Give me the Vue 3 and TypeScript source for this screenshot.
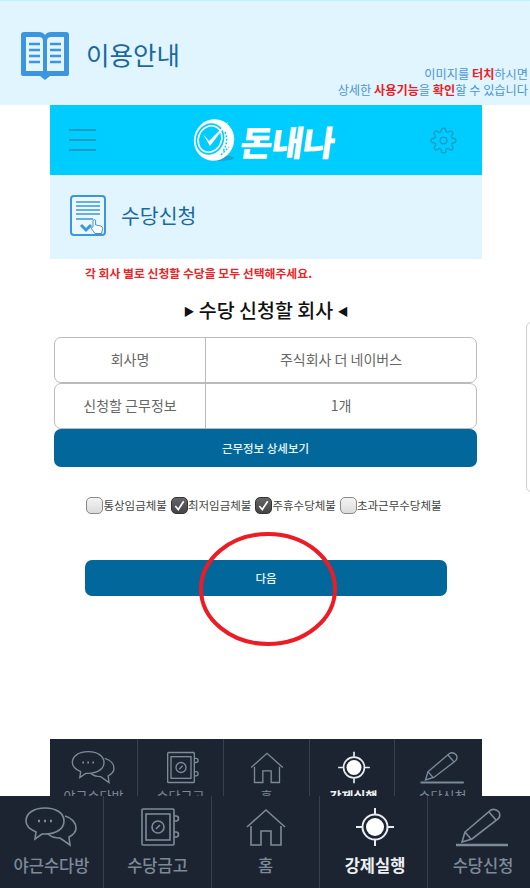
<template>
  <div class="page">
    <header class="guide">
      <div class="guide__title">
        <svg class="guide__book" viewBox="0 0 48 48" aria-hidden="true">
          <path d="M3 0h15q4 0 6 3q2-3 6-3h15q3 0 3 3v39q0 2-3 2H29l-5 4l-5-4H3q-3 0-3-2V3q0-3 3-3z" fill="#3d95de" />
          <path d="M5 5h13q4 0 4 4v30H5zM26 9q0-4 4-4h13v34H26z" fill="#e3f5ff" />
          <path d="M8 12h11M8 18h11M8 24h11M8 30h11M29 12h11M29 18h11M29 24h11M29 30h11" stroke="#3d95de" stroke-width="2.6" />
        </svg>
        <span>이용안내</span>
      </div>
      <p class="guide__help">
        이미지를 <b>터치</b>하시면<br />
        상세한 <b>사용기능</b>을 <b>확인</b>할 수 있습니다
      </p>
    </header>

    <div class="phone">
      <div class="topbar">
        <div class="topbar__menu"><i></i><i></i><i></i></div>
        <div class="logo">
          <svg class="logo__coin" viewBox="0 0 44 44" aria-hidden="true">
            <ellipse cx="27" cy="40" rx="15" ry="3" fill="#12a9d4" />
            <ellipse cx="22" cy="22" rx="20" ry="21" fill="#fff" transform="rotate(25 22 22)" />
            <ellipse cx="18" cy="21" rx="14" ry="16" fill="#00cdff" transform="rotate(25 18 21)" />
            <ellipse cx="18" cy="21" rx="11.5" ry="13.5" fill="none" stroke="#fff" stroke-width="1.6" transform="rotate(25 18 21)" />
            <path d="M11 16l6 7L37 3l-19 25z" fill="#fff" />
            <path d="M33 14q4 10-2 19M29 37l8-8" stroke="#00cdff" stroke-width="1.4" stroke-dasharray="2 1.5" fill="none" />
          </svg>
          <span class="logo__text">돈내나</span>
        </div>
        <svg class="topbar__gear" viewBox="0 0 24 24" aria-hidden="true">
          <circle cx="12" cy="12" r="3" />
          <path d="M19.4 15a1.65 1.65 0 0 0 .33 1.82l.06.06a2 2 0 0 1-2.83 2.83l-.06-.06a1.65 1.65 0 0 0-2.82 1.17V21a2 2 0 0 1-4 0v-.09A1.65 1.65 0 0 0 7.26 19.7l-.06.06a2 2 0 0 1-2.83-2.83l.06-.06A1.65 1.65 0 0 0 3.26 14H3a2 2 0 0 1 0-4h.09A1.65 1.65 0 0 0 4.3 7.2l-.06-.06a2 2 0 0 1 2.83-2.83l.06.06A1.65 1.65 0 0 0 10 3.2V3a2 2 0 0 1 4 0v.09a1.65 1.65 0 0 0 2.8 1.17l.06-.06a2 2 0 0 1 2.83 2.83l-.06.06A1.65 1.65 0 0 0 20.8 10H21a2 2 0 0 1 0 4h-.09a1.65 1.65 0 0 0-1.51 1z" />
        </svg>
      </div>

      <div class="subhead">
        <svg class="subhead__icon" viewBox="0 0 36 41" aria-hidden="true">
          <rect x="1" y="1" width="34" height="39" rx="3" fill="#e9f7fe" stroke="#3d95de" stroke-width="2" />
          <path d="M6 7h24M6 11h24M6 15h24M6 19h24M6 24h17" stroke="#3d95de" stroke-width="1.5" />
          <path d="M11 30l5 5l5-5" fill="none" stroke="#3d95de" stroke-width="3" />
          <path d="M21 33l2-1V26a1.3 1.3 0 0 1 2.6 0V30l5 1q2 .5 2 2.5l-1 5H25z" fill="#fff" stroke="#3d95de" stroke-width="1" />
        </svg>
        <span>수당신청</span>
      </div>

      <p class="notice">각 회사 별로 신청할 수당을 모두 선택해주세요.</p>
      <h2 class="heading"><small>▶</small> 수당 신청할 회사 <small>◀</small></h2>

      <div class="info">
        <div v-for="row in infoRows" :key="row.label" class="info__row">
          <div class="info__label">{{ row.label }}</div>
          <div class="info__value">{{ row.value }}</div>
        </div>
        <button class="btn btn--detail" type="button">근무정보 상세보기</button>
      </div>

      <div class="checks">
        <label v-for="check in checks" :key="check.label" class="check">
          <span :class="['check__box', { 'is-on': check.on }]">
            <svg v-if="check.on" viewBox="0 0 16 16" aria-hidden="true">
              <path d="M3.5 8.5l3.2 3.8L12.5 3.5" />
            </svg>
          </span>
          {{ check.label }}
        </label>
      </div>

      <div class="next">
        <button class="btn btn--next" type="button">다음</button>
        <svg class="next__mark" viewBox="0 0 140 116" aria-hidden="true">
          <ellipse cx="70" cy="58" rx="67" ry="55" />
        </svg>
      </div>

      <nav class="tabs tabs--inner" aria-label="미리보기 메뉴">
        <div v-for="tab in tabs" :key="tab.label" :class="['tab', { 'is-active': tab.active }]">
          <svg class="tab__icon" viewBox="0 0 60 44" aria-hidden="true" v-html="tab.icon"></svg>
          <span>{{ tab.label }}</span>
        </div>
      </nav>
    </div>

    <nav class="tabs tabs--main" aria-label="메뉴">
      <div v-for="tab in tabs" :key="tab.label" :class="['tab', { 'is-active': tab.active }]">
        <svg class="tab__icon" viewBox="0 0 60 44" aria-hidden="true" v-html="tab.icon"></svg>
        <span>{{ tab.label }}</span>
      </div>
    </nav>

    <div class="edge"></div>
  </div>
</template>

<script setup lang="ts">
interface Tab {
  label: string
  icon: string
  active?: boolean
}

const infoRows = [
  { label: '회사명', value: '주식회사 더 네이버스' },
  { label: '신청할 근무정보', value: '1개' },
]

const checks = [
  { label: '통상임금체불', on: false },
  { label: '최저임금체불', on: true },
  { label: '주휴수당체불', on: true },
  { label: '초과근무수당체불', on: false },
]

const tabs: Tab[] = [
  {
    label: '야근수다방',
    icon: '<path d="M14 27C7 24 4 20 4 16C4 8 12 3 23 3C34 3 42 8 42 16C42 24 34 29 23 29L20 29L13 34Z"/><path d="M43 11C50 13 54 18 54 23C54 27 51 30 47 32L48 40L38 33C33 33 29 32 26 29"/><path d="M16 16h2M22 16h2M28 16h2" stroke-width="2.4"/>',
  },
  {
    label: '수당금고',
    icon: '<rect x="14" y="4" width="32" height="36" rx="1"/><rect x="18" y="9" width="24" height="26"/><circle cx="30" cy="22" r="6"/><path d="M28 24l4-4M46 11h2a2 2 0 0 1 0 5h-2M46 27h2a2 2 0 0 1 0 5h-2"/>',
  },
  {
    label: '홈',
    icon: '<path d="M11 22L30 5L49 22"/><path d="M15 21V40H25V26H35V40H45V21"/>',
  },
  {
    label: '강제실행',
    active: true,
    icon: '<circle cx="30" cy="22" r="9" fill="#fff" stroke="none"/><circle cx="30" cy="22" r="12.5" stroke-width="2"/><path d="M30 3v6M30 35v6M11 22h6M43 22h6" stroke-width="2"/>',
  },
  {
    label: '수당신청',
    icon: '<path d="M12 27L38 5Q42 3 46 7Q48 11 45 14L19 34L9 37Z"/><path d="M36 7L43 15M12 27L18 34" /><path d="M3 40H55" stroke-width="2.5"/>',
  },
]
</script>

<style scoped>
.page {
  position: relative;
  width: 530px;
  height: 888px;
  overflow: hidden;
  background: #fff;
  font-family: "Noto Sans CJK KR", "Noto Sans", sans-serif;
}

.guide {
  display: flex;
  justify-content: space-between;
  box-sizing: border-box;
  height: 105px;
  padding: 31px 2px 7px 21px;
  background: #e0f5ff;
  border-top: 1px solid #bdf2ff;
}

.guide__title {
  display: flex;
  align-items: flex-start;
  gap: 17px;
  color: #1a689f;
  font-size: 25.5px;
  line-height: 44px;
}

.guide__book {
  width: 48px;
  height: 48px;
}

.guide__help {
  align-self: flex-end;
  margin: 0;
  color: #4a94d8;
  font-size: 12.2px;
  line-height: 16px;
  text-align: right;
}

.guide__help b {
  color: #ee1c25;
}

.phone {
  width: 432px;
  margin-left: 50px;
}

.topbar {
  display: flex;
  align-items: center;
  justify-content: space-between;
  box-sizing: border-box;
  height: 70px;
  padding: 0 25px 0 19px;
  background: #00cdff;
}

.topbar__menu {
  display: flex;
  flex-direction: column;
  gap: 8px;
  width: 27px;
}

.topbar__menu i {
  height: 2px;
  background: #1a9cc6;
}

.topbar__gear {
  width: 27px;
  height: 27px;
  fill: none;
  stroke: #1a9cc6;
  stroke-width: 1.2;
}

.logo {
  display: flex;
  align-items: center;
  gap: 5px;
  color: #fff;
  font-size: 35px;
  font-weight: 900;
  letter-spacing: -1px;
}

.logo__coin {
  width: 44px;
  height: 44px;
}

.logo__text {
  transform: skewX(-8deg);
}

.subhead {
  display: flex;
  align-items: center;
  gap: 15px;
  box-sizing: border-box;
  height: 84px;
  padding: 0 0 4px 20px;
  background: #e0f5ff;
  color: #1a689f;
  font-size: 20.5px;
}

.subhead__icon {
  width: 36px;
  height: 41px;
}

.notice {
  margin: 5px 0 0 35px;
  color: #e8262a;
  font-size: 11.85px;
  font-weight: 700;
  line-height: 18px;
}

.heading {
  margin: 14px 0 0;
  color: #111;
  font-size: 19.5px;
  font-weight: 500;
  line-height: 28px;
  text-align: center;
}

.heading small {
  font-size: 11px;
  vertical-align: 2px;
}

.info {
  display: flex;
  flex-direction: column;
  margin: 12px 5px 0 4px;
}

.info__row {
  display: grid;
  grid-template-columns: 150px 1fr;
  box-sizing: border-box;
  height: 46px;
  border: 1.5px solid #bbb;
  border-radius: 7px;
  color: #666;
  font-size: 14px;
  text-align: center;
  line-height: 43px;
}

.info__value {
  border-left: 1.5px solid #bbb;
}

.btn {
  display: block;
  border: none;
  background: #02689c;
  color: #e8f6ff;
  font-family: inherit;
  font-size: 11.5px;
  font-weight: 500;
}

.btn--detail {
  height: 38px;
  border-radius: 7px;
}

.checks {
  display: flex;
  justify-content: center;
  gap: 4px;
  margin-top: 29px;
  padding-right: 4px;
  color: #444;
  font-size: 11.5px;
  line-height: 18px;
}

.check {
  display: flex;
  align-items: center;
  gap: 0;
}

.check__box {
  box-sizing: border-box;
  width: 17px;
  height: 17px;
  border: 1px solid #888;
  border-radius: 5px;
  background: linear-gradient(#f3f3f3, #dcdcdc);
}

.check__box.is-on {
  border-color: #333;
  background: linear-gradient(#666, #444);
}

.check__box svg {
  display: block;
  width: 15px;
  height: 15px;
  fill: none;
  stroke: #fff;
  stroke-width: 1.8;
}

.next {
  position: relative;
  margin: 46px 35px 0;
}

.btn--next {
  width: 100%;
  height: 36px;
  border-radius: 7px;
}

.next__mark {
  position: absolute;
  top: -29px;
  left: 113px;
  width: 140px;
  height: 116px;
  fill: none;
  stroke: #ed1c24;
  stroke-width: 4;
}

.tabs {
  display: grid;
  background: #1c2431;
  color: #7d8a99;
}

.tabs--inner {
  grid-template-columns: 87px 86px 86px 85px 1fr;
  height: 57px;
  margin-top: 143px;
  overflow: hidden;
  font-size: 13px;
}

.tabs--main {
  grid-template-columns: 103px 108px 108px 108px 1fr;
  height: 92px;
  font-size: 16.5px;
  font-weight: 500;
}

.tab {
  display: flex;
  flex-direction: column;
  align-items: center;
  height: 100%;
  border-left: 1px solid #364050;
}

.tab:first-child {
  border-left: none;
}

.tab.is-active {
  padding-left: 3px;
  color: #eef1f4;
  font-weight: 700;
}

.tab:last-child {
  padding-left: 8px;
}

.tab__icon {
  fill: none;
  stroke: #7d8a99;
  stroke-width: 1.6;
}

.tab.is-active .tab__icon {
  stroke: #e8ecf0;
}

.tabs--inner .tab__icon {
  width: 50px;
  height: 37px;
  margin-top: 10px;
}

.tabs--inner .tab span {
  line-height: 20px;
}

.tabs--main .tab__icon {
  width: 60px;
  height: 44px;
  margin-top: 9px;
}

.tabs--main .tab span {
  line-height: 24px;
  margin-top: 4px;
}

.edge {
  position: absolute;
  top: 322px;
  right: -6px;
  width: 8px;
  height: 168px;
  border: 1px solid #ccc;
  border-radius: 6px;
}
</style>
